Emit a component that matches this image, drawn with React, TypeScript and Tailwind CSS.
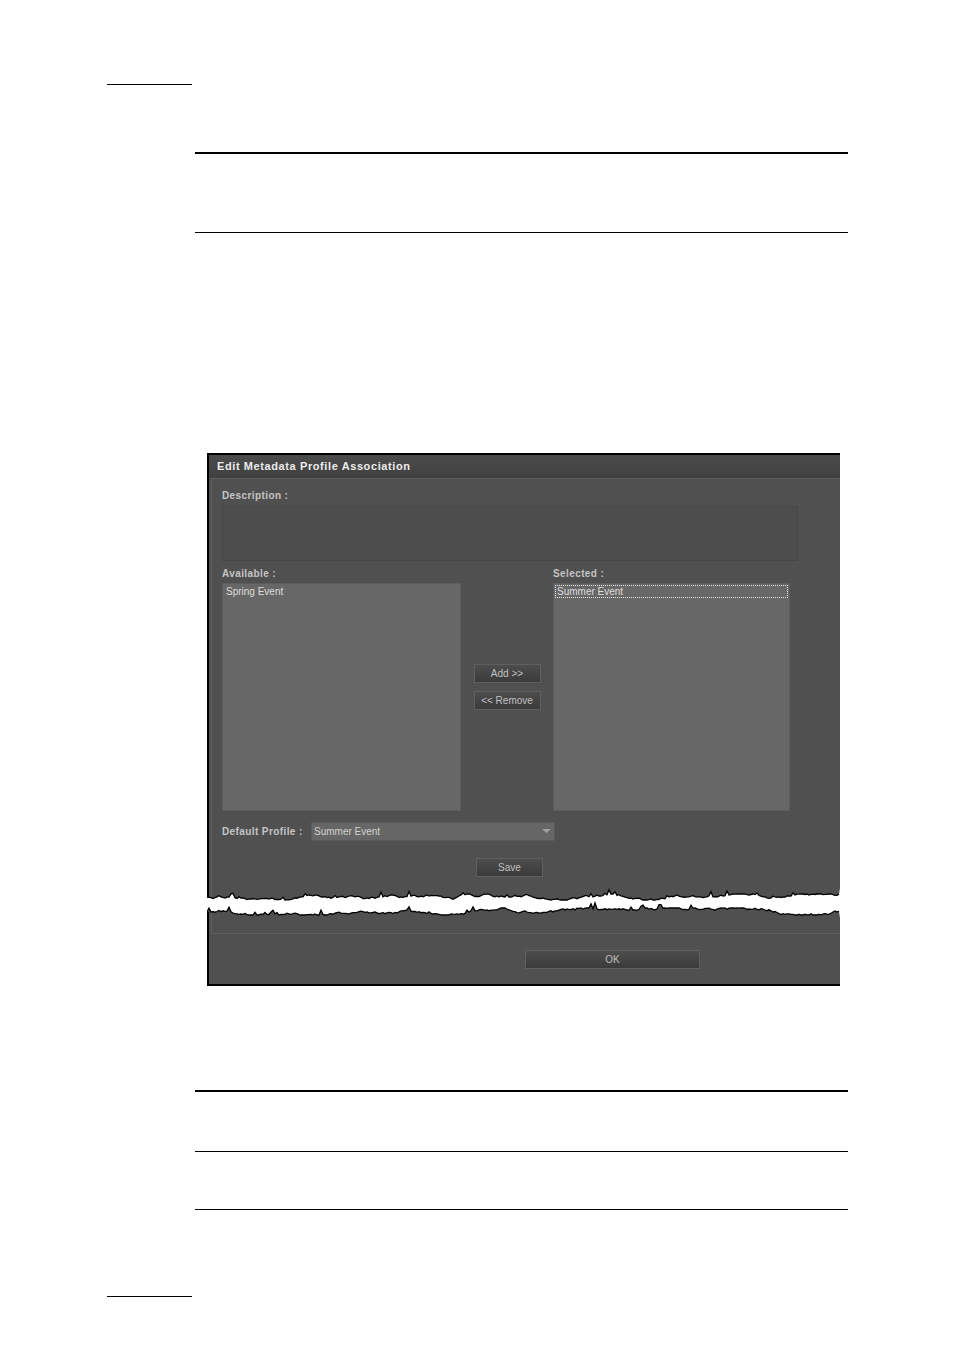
import React from 'react';

const W = 633;

// seeded noise so the torn edge is stable between renders
function rng(seed: number) {
  let s = seed;
  return () => {
    s = (s * 1103515245 + 12345) & 0x7fffffff;
    return s / 0x7fffffff;
  };
}

function edge(seed: number, base: number, lo: number, hi: number) {
  const r = rng(seed);
  const pts: [number, number][] = [];
  let y = base;
  for (let x = 0; x <= W; x += 2) {
    y += (r() - 0.5) * 2.4;
    y = Math.max(base - lo, Math.min(base + hi, y));
    let yy = y;
    if (r() < 0.07) yy -= 1 + r() * 4;
    pts.push([x, +yy.toFixed(1)]);
  }
  return pts;
}

function TornEdge() {
  const top = edge(7, 9, 3, 3);
  const bottom = edge(23, 23, 3, 4);
  const topLine = top.map(([x, y]) => `${x},${y}`).join(' ');
  const bottomLine = bottom.map(([x, y]) => `${x},${y}`).join(' ');
  const topPoly = `0,0 ${W},0 ` + [...top].reverse().map(([x, y]) => `${x},${y}`).join(' ');
  const bottomPoly = `${bottomLine} ${W},30 0,30`;

  return (
    <svg width={W} height={30} viewBox={`0 0 ${W} 30`} className="block">
      <polygon points={topPoly} fill="#505050" />
      <polygon points={bottomPoly} fill="#505050" />
      <rect x={0} y={0} width={2} height={top[0][1]} fill="#000" />
      <rect x={0} y={bottom[0][1]} width={2} height={30 - bottom[0][1]} fill="#000" />
      <line x1={4.5} y1={0} x2={4.5} y2={top[2][1] - 1} stroke="#5e5e5e" />
      <line x1={4.5} y1={bottom[2][1] + 1} x2={4.5} y2={30} stroke="#5e5e5e" />
      <polyline points={topLine} fill="none" stroke="#000" strokeWidth={1.3} />
      <polyline points={bottomLine} fill="none" stroke="#000" strokeWidth={1.3} />
    </svg>
  );
}

function Btn({ label, className = '' }: { label: string; className?: string }) {
  return (
    <div
      className={`h-[19px] flex items-center justify-center border border-[#5f5f5f] bg-linear-to-b from-[#4d4d4d] to-[#3b3b3b] text-[10px] text-[#c0c0c0] ${className}`}
    >
      {label}
    </div>
  );
}

export default function App() {
  return (
    <div
      className="w-[954px] h-[1349px] bg-white overflow-hidden"
      style={{ fontFamily: '"Liberation Sans", Arial, sans-serif' }}
    >
      {/* page header rules */}
      <div className="mt-[84px] ml-[107px] w-[85px] h-px bg-black" />
      <div className="mt-[67px] ml-[195px] w-[653px] h-[2px] bg-black" />
      <div className="mt-[78px] ml-[195px] w-[653px] h-px bg-black" />

      {/* dialog screenshot */}
      <div className="mt-[220px] ml-[207px] w-[633px]">
        <div className="border-l-2 border-t-2 border-black bg-[#505050]">
          <div className="h-[23px] pl-[8px] flex items-center bg-linear-to-b from-[#4b4b4b] to-[#404040] text-[11px] font-bold tracking-[0.6px] text-[#ececec]">
            Edit Metadata Profile Association
          </div>

          <div className="ml-[2px] border-l border-t border-[#5e5e5e] pl-[10px] pt-[11px] pb-[11px]">
            <div className="h-[12px] leading-[12px] text-[10px] font-bold tracking-[0.4px] text-[#c4c4c4]">
              Description :
            </div>
            <div className="mt-[4px] w-[576px] h-[55px] border border-[#474747] bg-[#4d4d4d]" />

            <div className="mt-[6px] h-[12px] leading-[13px] flex text-[10px] font-bold tracking-[0.4px] text-[#c4c4c4]">
              <div className="w-[331px]">Available :</div>
              <div>Selected :</div>
            </div>

            <div className="mt-[4px] h-[228px] flex">
              <div className="w-[239px] border border-[#5c5c5c] bg-[#676767] pl-[3px] pt-[2px] text-[10px] leading-[12px] text-[#dedede]">
                Spring Event
              </div>
              <div className="w-[92px] flex flex-col items-center pt-[81px] gap-[8px]">
                <Btn label="Add >>" className="w-[67px]" />
                <Btn label="<< Remove" className="w-[67px]" />
              </div>
              <div className="w-[237px] border border-[#5c5c5c] bg-[#676767] p-px">
                <div className="h-[13px] border border-dotted border-[#e8e8e8] pl-[1px] text-[10px] leading-[11px] text-[#dedede]">
                  Summer Event
                </div>
              </div>
            </div>

            <div className="mt-[11px] h-[19px] flex items-center">
              <div className="w-[89px] text-[10px] font-bold tracking-[0.4px] text-[#c4c4c4]">Default Profile :</div>
              <div className="w-[244px] h-[19px] border border-[#5a5a5a] bg-[#666666] flex items-center justify-between pl-[2px] pr-[3px] text-[10px] text-[#d2d2d2]">
                <span>Summer Event</span>
                <svg width="9" height="5" viewBox="0 0 9 5">
                  <polygon points="0,0 9,0 4.5,4" fill="#a0a0a0" />
                </svg>
              </div>
            </div>

            <Btn label="Save" className="mt-[17px] ml-[254px] w-[67px]" />
          </div>
        </div>

        <TornEdge />

        <div className="border-l-2 border-b-2 border-black bg-[#505050]">
          <div className="ml-[2px] h-[16px] border-l border-b border-[#5e5e5e]" />
          <div className="pt-[16px] pb-[15px]">
            <Btn label="OK" className="ml-[316px] w-[175px]" />
          </div>
        </div>
      </div>

      {/* page footer rules */}
      <div className="mt-[104px] ml-[195px] w-[653px] h-[2px] bg-black" />
      <div className="mt-[59px] ml-[195px] w-[653px] h-px bg-black" />
      <div className="mt-[57px] ml-[195px] w-[653px] h-px bg-black" />
      <div className="mt-[86px] ml-[107px] w-[85px] h-px bg-black" />
    </div>
  );
}
